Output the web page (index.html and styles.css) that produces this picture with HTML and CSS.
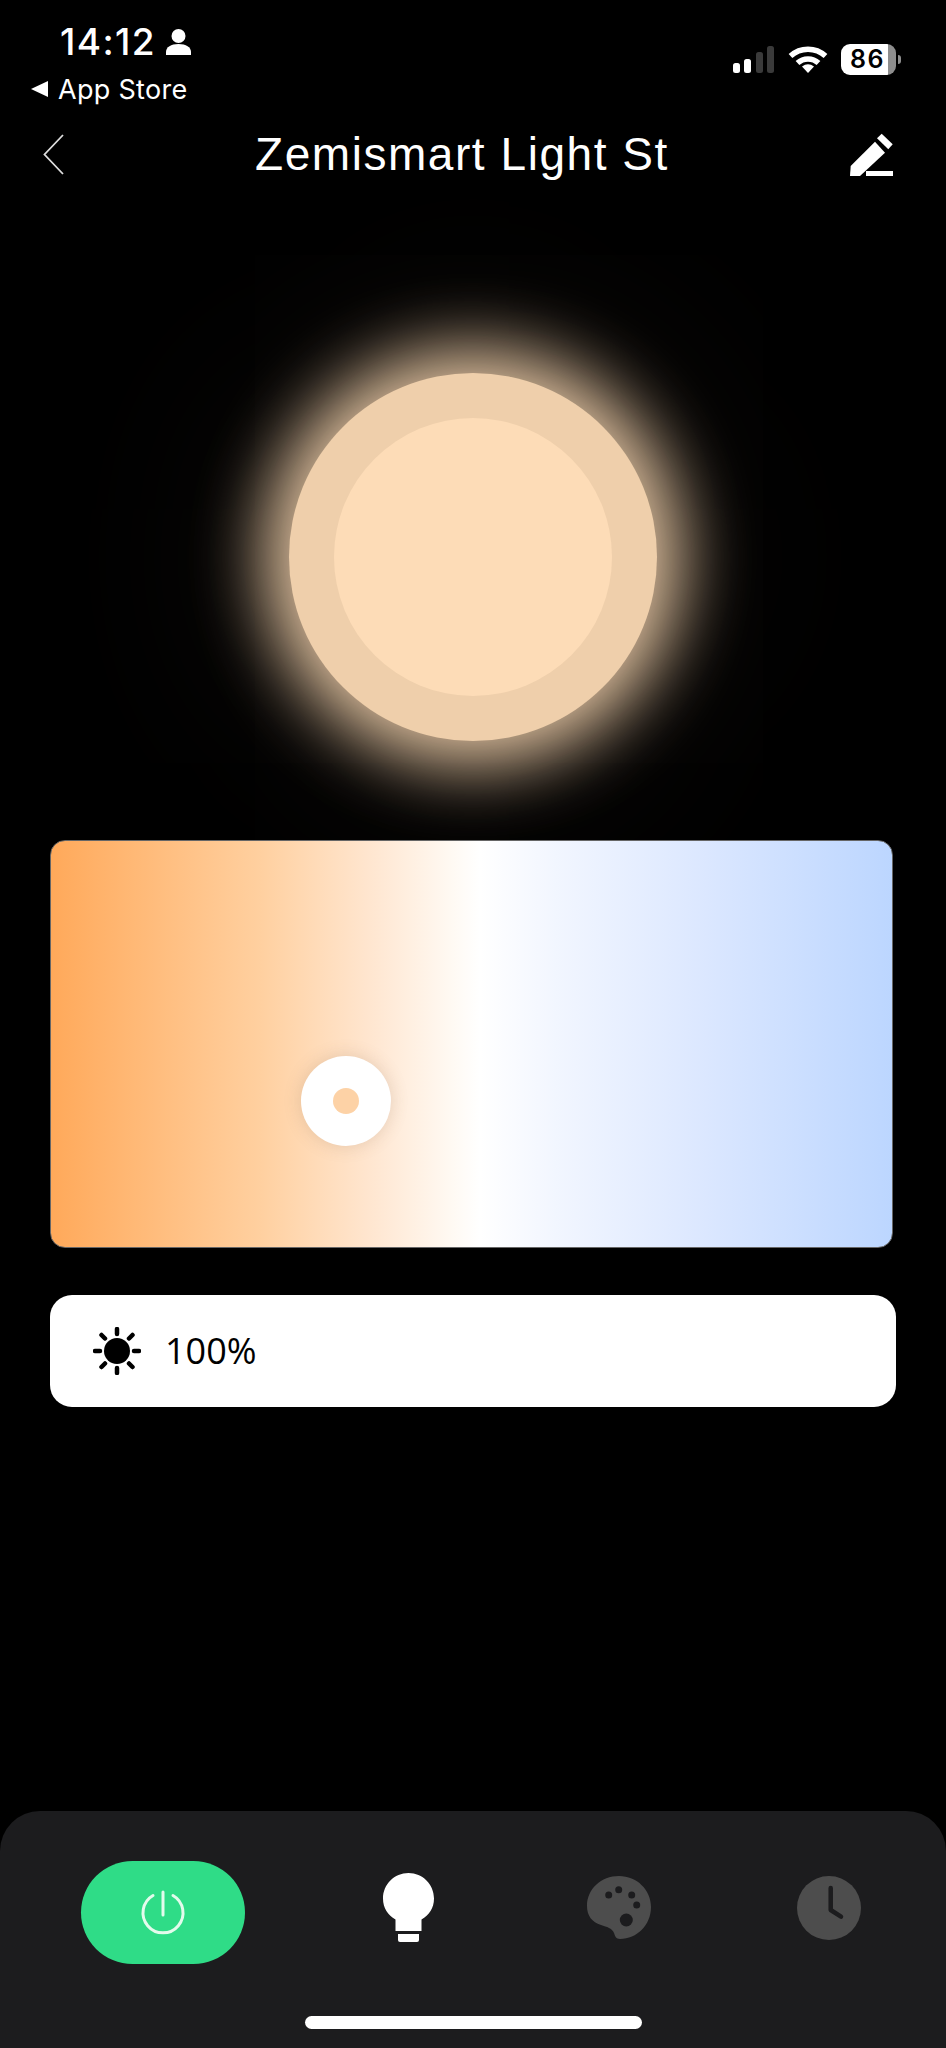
FILE: index.html
```html
<!DOCTYPE html>
<html lang="en">
<head>
    <meta charset="UTF-8">
    <meta name="viewport" content="width=device-width, initial-scale=1.0">
    <title>Zemismart Light St</title>
    <link rel="stylesheet" href="styles.css">
</head>
<body>
    <div class="page">
        <div class="status-bar">
            <div class="status-left">
                <div class="status-time">
                    <span>14:12</span>
                    <svg class="person-icon" viewBox="0 0 25 26"><circle cx="12.5" cy="7" r="7"/><path d="M0 26v-3c0-5 5-8 12.5-8S25 18 25 23v3z"/></svg>
                </div>
                <div class="status-back">
                    <svg class="back-arrow" viewBox="0 0 17 16"><path d="M17 0v16L0 8z"/></svg>
                    <span>App Store</span>
                </div>
            </div>
            <div class="status-right">
                <svg class="signal-icon" viewBox="0 0 42 27">
                    <rect x="0" y="17" width="7" height="10" rx="2.5" fill="#fff"/>
                    <rect x="11" y="13" width="7" height="14" rx="2.5" fill="#fff"/>
                    <rect x="23" y="6" width="7" height="21" rx="2.5" fill="#3a3a3a"/>
                    <rect x="34" y="0" width="7" height="27" rx="2.5" fill="#3a3a3a"/>
                </svg>
                <svg class="wifi-icon" viewBox="0 0 40 28">
                    <path d="M2.5 11A26 26 0 0 1 37.5 11M9.5 18A15.5 15.5 0 0 1 30.5 18" fill="none" stroke="#fff" stroke-width="5.5"/>
                    <path d="M14 21.5Q20 17 26 21.5L20 28z" fill="#fff"/>
                </svg>
                <div class="battery">86</div>
                <div class="battery-tip"></div>
            </div>
        </div>

        <div class="nav-bar">
            <svg class="nav-back" viewBox="0 0 21 41"><path d="M20 1L1.5 20.5 20 40" fill="none" stroke="#ddd" stroke-width="1.8"/></svg>
            <h1 class="nav-title">Zemismart Light St</h1>
            <svg class="nav-edit" viewBox="0 0 43 43">
                <path d="M.7 33L25 8.7 35 19.7 10 43H0z" fill="#fff"/>
                <path d="M31.7 .7L42.7 11.3 38.3 16.3 27 5.3z" fill="#fff"/>
                <rect x="16" y="38" width="27" height="5" fill="#fff"/>
            </svg>
        </div>

        <div class="lamp">
            <div class="lamp-outer">
                <div class="lamp-inner"></div>
            </div>
        </div>

        <div class="temp-panel">
            <div class="temp-handle">
                <div class="temp-handle-dot"></div>
            </div>
        </div>

        <div class="brightness">
            <svg class="sun-icon" viewBox="0 0 48 48">
                <circle cx="24" cy="24" r="13"/>
                <path d="M24 2v5M24 41v5M2 24h5M41 24h5M8.5 8l3.5 3.500M36 36.5l3.5 3.5M8.5 40l3.5-3.5M36 11.5l3.5-3.5" stroke="#000" stroke-width="4.5" stroke-linecap="round"/>
            </svg>
            <span class="brightness-value">100%</span>
        </div>

        <div class="tab-bar">
            <div class="tabs">
                <div class="power-btn">
                    <svg class="power-icon" viewBox="0 0 46 46">
                        <path d="M13 5.5A20 20 0 1 0 33 5.5M23 2v23" fill="none" stroke="#e3fbec" stroke-width="3" stroke-linecap="round"/>
                    </svg>
                </div>
                <svg class="bulb-icon" viewBox="0 0 51 69">
                    <path d="M25.5 0C39.6 0 51 11.4 51 25.5c0 9.5-5 16.5-12.500 21V58h-26V46.500C5 42 0 35 0 25.500 0 11.400 11.400 0 25.500 0z" fill="#fff"/>
                    <path d="M15 61h21v6a2 2 0 0 1-2 2H17a2 2 0 0 1-2-2z" fill="#fff"/>
                </svg>
                <svg class="palette-icon" viewBox="0 0 64 63">
                    <path d="M32 0C50 0 64 14 64 31 64 49 50 63 33 63 29 63 28 60 27 57 25 52 20 51 14 49 5 46 0 40 0 30 0 13 14 0 32 0z" fill="#4d4d4d"/>
                    <circle cx="21.7" cy="19" r="3.5" fill="#1c1c1e"/>
                    <circle cx="31.7" cy="13.7" r="3.5" fill="#1c1c1e"/>
                    <circle cx="44.7" cy="19" r="3.5" fill="#1c1c1e"/>
                    <circle cx="49.7" cy="29" r="3.5" fill="#1c1c1e"/>
                    <circle cx="39.3" cy="44" r="6.5" fill="#1c1c1e"/>
                </svg>
                <svg class="clock-icon" viewBox="0 0 64 64">
                    <circle cx="32" cy="32" r="32" fill="#4d4d4d"/>
                    <path d="M33.7 12V34L44 40.7" fill="none" stroke="#1c1c1e" stroke-width="4.5" stroke-linecap="round" stroke-linejoin="round"/>
                </svg>
            </div>
            <div class="home-bar"></div>
        </div>
    </div>
</body>
</html>
```
FILE: styles.css
```css
* {
    box-sizing: border-box;
}
body {
    margin: 0;
    background-color: #000;
    color: #fff;
    font-family: Inter, "Liberation Sans", sans-serif;
}
.page {
    width: 946px;
    height: 2048px;
    display: flex;
    flex-direction: column;
    overflow: hidden;
}

/* status bar */
.status-bar {
    height: 104px;
    display: flex;
    justify-content: space-between;
    padding: 22px 45px 0 31px;
}
.status-time {
    display: flex;
    align-items: center;
    gap: 10px;
    margin-left: 29px;
    height: 40px;
    font-size: 37px;
    font-weight: 500;
    line-height: 40px;
    letter-spacing: 1.4px;
}
.person-icon {
    width: 25px;
    height: 26px;
    fill: #fff;
}
.status-back {
    display: flex;
    align-items: center;
    gap: 10px;
    height: 32px;
    margin-top: 11px;
    font-size: 27px;
    letter-spacing: 0.3px;
}
.back-arrow {
    width: 17px;
    height: 16px;
    fill: #fff;
}
.status-right {
    display: flex;
    align-items: flex-start;
    padding-top: 22px;
}
.signal-icon {
    width: 42px;
    height: 27px;
    margin-top: 2px;
    margin-right: 13px;
}
.wifi-icon {
    width: 40px;
    height: 28px;
    margin-top: 1px;
    margin-right: 13px;
}
.battery {
    width: 55px;
    height: 31px;
    border-radius: 9px;
    background: linear-gradient(to right, #fff 47px, #8e8e8e 47px);
    color: #000;
    font-size: 25px;
    font-weight: 600;
    line-height: 31px;
    letter-spacing: 1.5px;
    padding-left: 9px;
}
.battery-tip {
    width: 3px;
    height: 9px;
    margin: 11px 0 0 2px;
    border-radius: 0 3px 3px 0;
    background: #8e8e8e;
}

/* nav */
.nav-bar {
    display: flex;
    align-items: center;
    height: 46px;
    margin-top: 27px;
    padding: 0 53px 0 43px;
}
.nav-back {
    width: 21px;
    height: 41px;
}
.nav-title {
    margin: 0 0 0 191px;
    font-family: "Liberation Sans", Arial, sans-serif;
    font-size: 46px;
    font-weight: 400;
    letter-spacing: 1.55px;
    line-height: 46px;
    white-space: nowrap;
}
.nav-edit {
    width: 43px;
    height: 43px;
    margin-left: auto;
}

/* lamp */
.lamp {
    display: flex;
    justify-content: center;
    padding-top: 196px;
}
.lamp-outer {
    width: 368px;
    height: 368px;
    border-radius: 50%;
    background-color: #efcfab;
    display: flex;
    align-items: center;
    justify-content: center;
    box-shadow: 0 0 70px 24px rgba(239, 207, 171, 0.96), 0 0 220px 50px rgba(200, 170, 140, 0.09);
}
.lamp-inner {
    width: 278px;
    height: 278px;
    border-radius: 50%;
    background-color: #fddcb7;
}

/* colour temperature */
.temp-panel {
    position: relative;
    height: 408px;
    margin: 99px 53px 0 50px;
    border-radius: 15px;
    border: 1px solid #666;
    background: linear-gradient(to right, #ffa95a 0%, #ffd0a0 25%, #ffe6d0 38%, #fffaf4 48%, #fff 51%, #f2f6ff 60%, #dbe7ff 78%, #bcd6ff 100%);
}
.temp-handle {
    position: absolute;
    left: 250px;
    top: 215px;
    width: 90px;
    height: 90px;
    border-radius: 50%;
    background: #fff;
    display: flex;
    align-items: center;
    justify-content: center;
    box-shadow: 0 0 18px rgba(120, 90, 60, 0.2);
}
.temp-handle-dot {
    width: 26px;
    height: 26px;
    border-radius: 50%;
    background: #fdd2a6;
}

/* brightness */
.brightness {
    display: flex;
    align-items: center;
    gap: 24px;
    height: 112px;
    margin: 47px 50px 0 50px;
    padding-left: 43px;
    background: #fff;
    border-radius: 22px;
}
.sun-icon {
    width: 48px;
    height: 48px;
}
.brightness-value {
    color: #000;
    font-family: "Open Sans", sans-serif;
    font-size: 36px;
    font-weight: 500;
    line-height: 44px;
}

/* bottom tabs */
.tab-bar {
    margin-top: auto;
    height: 237px;
    background: #1c1c1e;
    border-radius: 40px 40px 0 0;
    position: relative;
}
.tabs {
    display: flex;
    align-items: flex-start;
    padding: 50px 0 0 81px;
}
.power-btn {
    width: 164px;
    height: 103px;
    border-radius: 52px;
    background: #2fdc87;
    display: flex;
    align-items: center;
    justify-content: center;
}
.power-icon {
    width: 46px;
    height: 46px;
}
.bulb-icon {
    width: 51px;
    height: 69px;
    margin: 12px 0 0 138px;
}
.palette-icon {
    width: 64px;
    height: 63px;
    margin: 15px 0 0 153px;
}
.clock-icon {
    width: 64px;
    height: 64px;
    margin: 15px 0 0 146px;
}
.home-bar {
    position: absolute;
    left: 305px;
    top: 205px;
    width: 337px;
    height: 13px;
    border-radius: 7px;
    background: #fff;
}
```
